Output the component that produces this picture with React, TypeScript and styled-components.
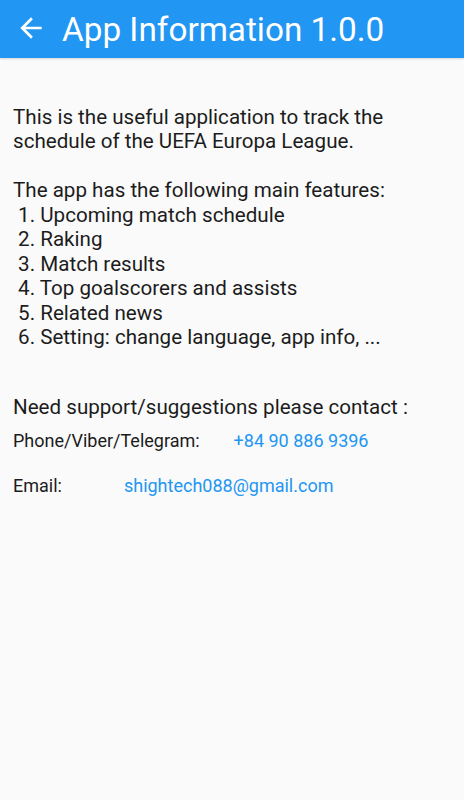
import React from "react";
import styled, { createGlobalStyle } from "styled-components";

const Global = createGlobalStyle`
  html, body { margin: 0; padding: 0; background: #fafafa; }
  body { font-family: Roboto, "Noto Sans", sans-serif; }
`;

const Page = styled.div`
  width: 464px;
  min-height: 800px;
  background: #fafafa;
  display: flex;
  flex-direction: column;
`;

const AppBar = styled.header`
  height: 58px;
  background: #2196f3;
  display: flex;
  align-items: center;
  box-shadow: 0 1px 2px rgba(0, 0, 0, 0.15);
`;

const BackButton = styled.button`
  width: 62px;
  height: 58px;
  padding: 0 0 2px 15px;
  border: none;
  background: transparent;
  display: flex;
  align-items: center;
  color: #fff;
`;

const Title = styled.h1`
  margin: 0;
  font-family: Roboto, sans-serif;
  font-weight: 400;
  font-size: 33.3px;
  color: #fff;
`;

const Content = styled.main`
  padding: 47px 13px 0;
  display: flex;
  flex-direction: column;
`;

const Paragraph = styled.p`
  margin: 0;
  font-size: 20.6px;
  line-height: 24.45px;
  color: #1c1c1c;
  white-space: pre-wrap;
`;

const ContactHeading = styled(Paragraph)`
  margin-top: 45px;
`;

const ContactRow = styled.div<{ $gap: number; $top: number }>`
  display: flex;
  margin-top: ${(p) => p.$top}px;
  gap: ${(p) => p.$gap}px;
  font-size: 18px;
  line-height: 22px;
`;

const Label = styled.span`
  color: #1c1c1c;
`;

const Link = styled.span`
  color: #2196f3;
`;

const intro = `This is the useful application to track the schedule of the UEFA Europa League.

The app has the following main features:
 1. Upcoming match schedule
 2. Raking
 3. Match results
 4. Top goalscorers and assists
 5. Related news
 6. Setting: change language, app info, ...`;

export default function App() {
  return (
    <>
      <Global />
      <Page>
        <AppBar>
          <BackButton aria-label="Back">
            <svg width="32" height="32" viewBox="0 0 24 24" fill="currentColor">
              <path d="M20 11H7.83l5.59-5.59L12 4l-8 8 8 8 1.41-1.41L7.83 13H20v-2z" />
            </svg>
          </BackButton>
          <Title>App Information 1.0.0</Title>
        </AppBar>
        <Content>
          <Paragraph>{intro}</Paragraph>
          <ContactHeading>Need support/suggestions please contact :</ContactHeading>
          <ContactRow $gap={34} $top={11}>
            <Label>Phone/Viber/Telegram:</Label>
            <Link>+84 90 886 9396</Link>
          </ContactRow>
          <ContactRow $gap={62} $top={23}>
            <Label>Email:</Label>
            <Link>shightech088@gmail.com</Link>
          </ContactRow>
        </Content>
      </Page>
    </>
  );
}
